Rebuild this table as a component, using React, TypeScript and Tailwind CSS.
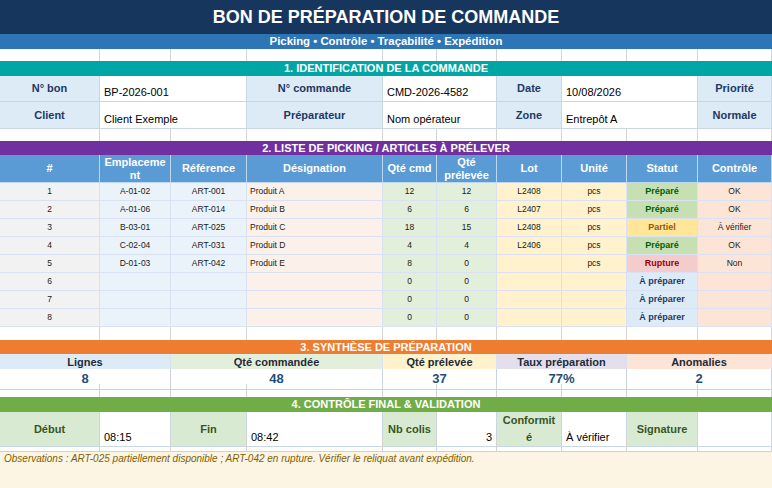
import React from "react";

const GRID =
  "grid grid-cols-[100px_71px_76px_136px_54px_60px_65px_65px_71px_74px]";

const font = { fontFamily: '"Liberation Sans", Arial, sans-serif' };

interface PickRow {
  n: number;
  loc: string;
  ref: string;
  name: string;
  qty: number;
  picked: number;
  lot: string;
  unit: string;
  status: "Préparé" | "Partiel" | "Rupture" | "À préparer";
  check: string;
}

const rows: PickRow[] = [
  { n: 1, loc: "A-01-02", ref: "ART-001", name: "Produit A", qty: 12, picked: 12, lot: "L2408", unit: "pcs", status: "Préparé", check: "OK" },
  { n: 2, loc: "A-01-06", ref: "ART-014", name: "Produit B", qty: 6, picked: 6, lot: "L2407", unit: "pcs", status: "Préparé", check: "OK" },
  { n: 3, loc: "B-03-01", ref: "ART-025", name: "Produit C", qty: 18, picked: 15, lot: "L2408", unit: "pcs", status: "Partiel", check: "À vérifier" },
  { n: 4, loc: "C-02-04", ref: "ART-031", name: "Produit D", qty: 4, picked: 4, lot: "L2406", unit: "pcs", status: "Préparé", check: "OK" },
  { n: 5, loc: "D-01-03", ref: "ART-042", name: "Produit E", qty: 8, picked: 0, lot: "", unit: "pcs", status: "Rupture", check: "Non" },
  { n: 6, loc: "", ref: "", name: "", qty: 0, picked: 0, lot: "", unit: "", status: "À préparer", check: "" },
  { n: 7, loc: "", ref: "", name: "", qty: 0, picked: 0, lot: "", unit: "", status: "À préparer", check: "" },
  { n: 8, loc: "", ref: "", name: "", qty: 0, picked: 0, lot: "", unit: "", status: "À préparer", check: "" },
];

const statusStyle: Record<PickRow["status"], string> = {
  "Préparé": "bg-[#c6e0b4] text-[#006100]",
  Partiel: "bg-[#ffe699] text-[#9c5700]",
  Rupture: "bg-[#f4cccc] text-[#9c0006]",
  "À préparer": "bg-[#ddebf7] text-[#1f3864]",
};

const EmptyRow = ({ h }: { h: string }) => (
  <div className={`${GRID} ${h} bg-white`}>
    {Array.from({ length: 10 }).map((_, i) => (
      <div key={i} className="border-r border-[#d4d4d4]" />
    ))}
  </div>
);

const Banner = ({ text, className }: { text: string; className: string }) => (
  <div
    className={`flex items-center justify-center text-[11px] font-bold text-white leading-none ${className}`}
  >
    {text}
  </div>
);

const IdLabel = ({ children }: { children: React.ReactNode }) => (
  <div className="flex items-center justify-center bg-[#ddebf7] border-r border-b border-[#c9d6e3] text-[11px] font-bold text-[#1f3864]">
    {children}
  </div>
);

const IdValue = ({ children, span }: { children: React.ReactNode; span?: boolean }) => (
  <div
    className={`flex items-end bg-white border-r border-b border-[#c9d6e3] px-1 pb-[1px] text-[11px] text-black ${span ? "col-span-2" : ""}`}
  >
    {children}
  </div>
);

const Td = ({ children, className }: { children?: React.ReactNode; className: string }) => (
  <div
    className={`flex items-center border-r border-b border-[#d9e1f2] text-[8.5px] text-[#1a1a1a] ${className}`}
  >
    {children}
  </div>
);

const Th = ({ children }: { children: React.ReactNode }) => (
  <div className="flex items-center justify-center text-center bg-[#5b9bd5] border-r border-b border-[#bdd7ee] text-[11px] font-bold text-white leading-[13px]">
    {children}
  </div>
);

const SynthLabel = ({ children, className }: { children: React.ReactNode; className: string }) => (
  <div
    className={`flex items-center justify-center border-r border-b border-[#d9e1f2] text-[11px] font-bold text-[#222b38] ${className}`}
  >
    {children}
  </div>
);

const SynthValue = ({ children, span }: { children: React.ReactNode; span: string }) => (
  <div
    className={`flex items-center justify-center bg-white border-r border-b border-[#c9d2dc] text-[13px] font-bold text-[#1f4e79] ${span}`}
  >
    {children}
  </div>
);

const ValLabel = ({ children }: { children: React.ReactNode }) => (
  <div className="flex items-center justify-center text-center bg-[#d9ead3] border-r border-b border-[#c9d6e3] text-[11px] font-bold text-[#375623] leading-[17px]">
    {children}
  </div>
);

const ValValue = ({ children, right }: { children?: React.ReactNode; right?: boolean }) => (
  <div
    className={`flex items-end bg-white border-r border-b border-[#c9d6e3] px-1 pb-[1px] text-[11px] text-black ${right ? "justify-end" : ""}`}
  >
    {children}
  </div>
);

export default function App() {
  return (
    <div className="w-[772px] h-[488px] overflow-hidden bg-white" style={font}>
      {/* Title */}
      <div className="h-[34px] bg-[#17365d] flex items-center justify-center text-[18px] font-bold text-white">
        BON DE PRÉPARATION DE COMMANDE
      </div>
      <div className="h-[15px] bg-[#2e75b6] flex items-center justify-center pt-[1px] text-[11.4px] font-bold text-white leading-none">
        Picking • Contrôle • Traçabilité • Expédition
      </div>
      <EmptyRow h="h-[12px]" />

      {/* 1. Identification */}
      <Banner text="1. IDENTIFICATION DE LA COMMANDE" className="h-[15px] bg-[#00a6a6]" />
      <div className={`${GRID} h-[26px]`}>
        <IdLabel>N° bon</IdLabel>
        <IdValue span>BP-2026-001</IdValue>
        <IdLabel>N° commande</IdLabel>
        <IdValue span>CMD-2026-4582</IdValue>
        <IdLabel>Date</IdLabel>
        <IdValue span>10/08/2026</IdValue>
        <IdLabel>Priorité</IdLabel>
      </div>
      <div className={`${GRID} h-[27px]`}>
        <IdLabel>Client</IdLabel>
        <IdValue span>Client Exemple</IdValue>
        <IdLabel>Préparateur</IdLabel>
        <IdValue span>Nom opérateur</IdValue>
        <IdLabel>Zone</IdLabel>
        <IdValue span>Entrepôt A</IdValue>
        <IdLabel>Normale</IdLabel>
      </div>
      <EmptyRow h="h-[12px]" />

      {/* 2. Picking list */}
      <Banner text="2. LISTE DE PICKING / ARTICLES À PRÉLEVER" className="h-[14px] bg-[#7030a0]" />
      <div className={`${GRID} h-[28px]`}>
        <Th>#</Th>
        <Th>
          Emplaceme
          <br />
          nt
        </Th>
        <Th>Référence</Th>
        <Th>Désignation</Th>
        <Th>Qté cmd</Th>
        <Th>
          Qté
          <br />
          prélevée
        </Th>
        <Th>Lot</Th>
        <Th>Unité</Th>
        <Th>Statut</Th>
        <Th>Contrôle</Th>
      </div>
      {rows.map((r) => (
        <div key={r.n} className={`${GRID} h-[18px]`}>
          <Td className="justify-center bg-[#f2f2f2]">{r.n}</Td>
          <Td className="justify-center bg-[#eaf2fa]">{r.loc}</Td>
          <Td className="justify-center bg-[#eaf2fa]">{r.ref}</Td>
          <Td className="px-[3px] bg-[#fcf1e8]">{r.name}</Td>
          <Td className="justify-center bg-[#e2efda]">{r.qty}</Td>
          <Td className="justify-center bg-[#e2efda]">{r.picked}</Td>
          <Td className="justify-center bg-[#fff2cc]">{r.lot}</Td>
          <Td className="justify-center bg-[#fff2cc]">{r.unit}</Td>
          <Td className={`justify-center font-bold text-[9px] ${statusStyle[r.status]}`}>{r.status}</Td>
          <Td className="justify-center bg-[#fce4d6]">{r.check}</Td>
        </div>
      ))}
      <EmptyRow h="h-[13px]" />

      {/* 3. Synthèse */}
      <Banner text="3. SYNTHÈSE DE PRÉPARATION" className="h-[14px] bg-[#ed7d31]" />
      <div className={`${GRID} h-[15px]`}>
        <SynthLabel className="col-span-2 bg-[#ddebf7]">Lignes</SynthLabel>
        <SynthLabel className="col-span-2 bg-[#e2efda]">Qté commandée</SynthLabel>
        <SynthLabel className="col-span-2 bg-[#fff2cc]">Qté prélevée</SynthLabel>
        <SynthLabel className="col-span-2 bg-[#e4dfec]">Taux préparation</SynthLabel>
        <SynthLabel className="col-span-2 bg-[#fce4d6]">Anomalies</SynthLabel>
      </div>
      <div className={`${GRID} h-[15px]`}>
        <SynthValue span="col-span-2">8</SynthValue>
        <SynthValue span="col-span-2">48</SynthValue>
        <SynthValue span="col-span-2">37</SynthValue>
        <SynthValue span="col-span-2">77%</SynthValue>
        <SynthValue span="col-span-2">2</SynthValue>
      </div>
      <EmptyRow h="h-[13px]" />

      {/* 4. Validation */}
      <Banner text="4. CONTRÔLE FINAL & VALIDATION" className="h-[15px] bg-[#70ad47]" />
      <div className={`${GRID} h-[26px]`}>
        <ValLabel>Début</ValLabel>
        <ValValue>08:15</ValValue>
        <ValLabel>Fin</ValLabel>
        <ValValue>08:42</ValValue>
        <ValLabel>Nb colis</ValLabel>
        <ValValue right>3</ValValue>
        <ValLabel>
          Conformit
          <br />é
        </ValLabel>
        <ValValue>À vérifier</ValValue>
        <ValLabel>Signature</ValLabel>
        <ValValue />
      </div>
      <EmptyRow h="h-[13px]" />

      {/* Observations */}
      <div className="h-[37px] bg-[#fdf5e4] border-t border-[#c9d2dc] px-1 text-[10px] italic text-[#7f6000] leading-[13px]">
        Observations : ART-025 partiellement disponible ; ART-042 en rupture. Vérifier le reliquat avant expédition.
      </div>
    </div>
  );
}
